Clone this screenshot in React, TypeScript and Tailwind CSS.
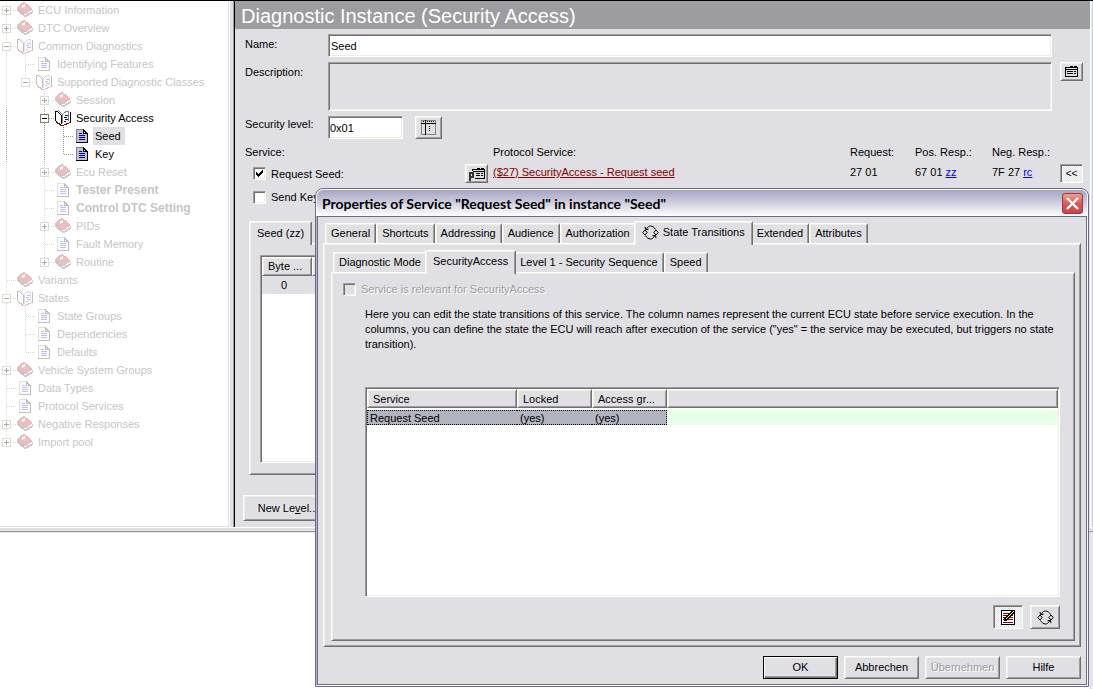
import React from "react";

const bevelOut =
  "border border-t-white border-l-white border-r-[#71706a] border-b-[#71706a] shadow-[inset_1px_1px_0_#f1efe2,inset_-1px_-1px_0_#9d9ca1]";
const bevelIn =
  "border border-t-[#9d9ca1] border-l-[#9d9ca1] border-r-white border-b-white shadow-[inset_1px_1px_0_#71706a,inset_-1px_-1px_0_#f1efe2]";
const hatch =
  "bg-[repeating-conic-gradient(#ffffff_0_25%,#e0dfe3_0_50%)] bg-size-[2px_2px]";

/* ---------- tree ---------- */

type Kind = "book" | "open" | "doc";
type Node = { cells: string; kind: Kind; label: string; live?: boolean; bold?: boolean; selected?: boolean };

/* One character per indent column:
   "|" line, "+" / "-" expander, "m" / "c" last expander (open / closed),
   "t" branch, "l" last branch, "." blank */
const nodes: Node[] = [
  { cells: "+", kind: "book", label: "ECU Information" },
  { cells: "+", kind: "book", label: "DTC Overview" },
  { cells: "-", kind: "open", label: "Common Diagnostics" },
  { cells: "|t", kind: "doc", label: "Identifying Features" },
  { cells: "|m", kind: "open", label: "Supported Diagnostic Classes" },
  { cells: "|.+", kind: "book", label: "Session" },
  { cells: "|.-", kind: "open", label: "Security Access", live: true },
  { cells: "|.|t", kind: "doc", label: "Seed", live: true, selected: true },
  { cells: "|.|l", kind: "doc", label: "Key", live: true },
  { cells: "|.+", kind: "book", label: "Ecu Reset" },
  { cells: "|.t", kind: "doc", label: "Tester Present", bold: true },
  { cells: "|.t", kind: "doc", label: "Control DTC Setting", bold: true },
  { cells: "|.+", kind: "book", label: "PIDs" },
  { cells: "|.t", kind: "doc", label: "Fault Memory" },
  { cells: "|.c", kind: "book", label: "Routine" },
  { cells: "t", kind: "book", label: "Variants" },
  { cells: "-", kind: "open", label: "States" },
  { cells: "|t", kind: "doc", label: "State Groups" },
  { cells: "|t", kind: "doc", label: "Dependencies" },
  { cells: "|l", kind: "doc", label: "Defaults" },
  { cells: "+", kind: "book", label: "Vehicle System Groups" },
  { cells: "t", kind: "doc", label: "Data Types" },
  { cells: "t", kind: "doc", label: "Protocol Services" },
  { cells: "+", kind: "book", label: "Negative Responses" },
  { cells: "c", kind: "book", label: "Import pool" },
];

function Cell({ type, last, live }: { type: string; last: boolean; live?: boolean }) {
  const box = "+-cm".includes(type);
  const minus = type === "-" || type === "m";
  const stops = "lcm".includes(type);
  const line = live ? "#9d9c80" : "#dcdbd0";
  return (
    <svg width={last ? 16 : 19} height="18" className="shrink-0" shapeRendering="crispEdges" fill="none">
      {type !== "." && (
        <path d={stops ? "M6.5 0V9" : "M6.5 0V18"} stroke={line} strokeDasharray="1 1" />
      )}
      {last && <path d="M7 9.5H16" stroke={line} strokeDasharray="1 1" />}
      {box && (
        <>
          <rect x="2.5" y="5.5" width="8" height="8" fill="#fff" stroke={live ? "#848267" : "#dddcd0"} />
          <path d={minus ? "M4 9.5H9" : "M4 9.5H9M6.5 7V12"} stroke={live ? "#000" : "#a8a8a8"} />
        </>
      )}
    </svg>
  );
}

function NodeIcon({ kind, live }: { kind: Kind; live?: boolean }) {
  return (
    <svg width="18" height="18" className={live ? "shrink-0" : "shrink-0 opacity-25"} shapeRendering="crispEdges">
      {kind === "book" && (
        <>
          <path d="M1 7L8 2L16 9V12L9 16L1 9Z" fill="#fff" stroke="#444" />
          <path d="M1 7L8 1L16 8L9 13Z" fill="#b80000" stroke="#700" />
          <path d="M2 9L9 15L16 11" fill="none" stroke="#222" />
          <path d="M6 6L9 4" stroke="#fff" strokeWidth="2" />
        </>
      )}
      {kind === "open" && (
        <>
          <path d="M1 2H4L5 1L9 5L15 2V13L7 16L1 12Z" fill="#fff" />
          <path d="M1.5 2V11.5L6.5 16M1 2.5H3.5L7.5 6.5V15" fill="none" stroke="#000" />
          <path d="M4.5 1.5L8.5 5.5V14" fill="none" stroke="#848284" />
          <path d="M9 4.5L12.5 2.5H14.5V12" fill="none" stroke="#848284" />
          <path d="M16.5 3V13.5" stroke="#000" />
          <path d="M2 13L7 16.5H9L16 13.5" fill="none" stroke="#900000" />
          <path d="M11 6.5H14M10 8.5H13M11 10.5H14M10 12.5H12" stroke="#0000d8" />
        </>
      )}
      {kind === "doc" && (
        <>
          <path d="M3 2H11V6H15V16H3Z" fill={live ? "#c3c3c3" : "#f4f4f4"} />
          <path d="M3.5 16V2.5H11" fill="none" stroke="#848284" />
          <path d="M3 15.5H14.5V6.5H10.5V3L14.5 7" fill="none" stroke="#000" />
          <rect x="6" y="6" width="3" height="1" fill={live ? "#0000a8" : "#0000ff"} />
          <rect x="6" y="8" width="6" height="1" fill={live ? "#0000a8" : "#0000ff"} />
          <rect x="6" y="10" width="6" height="1" fill={live ? "#0000a8" : "#0000ff"} />
          <rect x="6" y="12" width="6" height="1" fill={live ? "#0000a8" : "#0000ff"} />
        </>
      )}
    </svg>
  );
}

function Tree() {
  return (
    <ul className="min-w-0 flex-1 border-r border-b border-[#dedde6]">
      {nodes.map((n) => (
        <li key={n.label} className="flex h-[18px] items-center whitespace-nowrap">
          {n.cells.split("").map((c, i) => (
            <Cell key={i} type={c} last={i === n.cells.length - 1} live={n.live} />
          ))}
          <NodeIcon kind={n.kind} live={n.live} />
          <span
            className={`ml-0.5 h-[18px] pl-0.5 leading-[18px] ${n.live ? "text-black" : "text-[#c6c6c6]"} ${
              n.bold ? "text-[12px] font-bold" : ""
            } ${n.selected ? "bg-[#e0dfe3] pr-1" : ""}`}
          >
            {n.label}
          </span>
        </li>
      ))}
    </ul>
  );
}

/* ---------- small drawings ---------- */

function CycleIcon() {
  return (
    <svg width="17" height="15" fill="none" stroke="#000" strokeWidth="1">
      <path d="M3 5L.8 7.5L3 10L5.2 7.5ZM14 5L11.8 7.5L14 10L16.2 7.5Z" />
      <path d="M4.5 4C5.5 2 7 1 8.5 1C10.5 1 12.5 2.5 13.5 4.5M3.5 10.5C4.5 12.5 6.5 14 8.5 14C10 14 11.5 13 12.5 11" />
      <path d="M3 1.8L3.5 4.6L6.5 4.2M14 13.2L13.5 10.4L10.5 10.8" />
    </svg>
  );
}

function FormIcon() {
  return (
    <svg width="13" height="11" shapeRendering="crispEdges" fill="none" stroke="#000">
      <path d="M.5 1.5H12.5V10.5H.5ZM1 3.5H12M5 .5H8M9 .5H12" />
      <path d="M2 5.5H8M9 5.5H11M2 7.5H8M9 7.5H11" />
    </svg>
  );
}

function ProtocolIcon() {
  return (
    <svg width="18" height="16" shapeRendering="crispEdges" fill="none" stroke="#000">
      <path d="M4.5 5V3.5H16.5V12.5H7M5 5.5H16M9 2.5H12M13 2.5H16" />
      <path d="M8 7.5H12M13 7.5H15M8 9.5H12M13 9.5H15" />
      <path d="M2 6V15M2 7H5V11H2" stroke="#333" strokeWidth="2" />
    </svg>
  );
}

function GridIcon() {
  return (
    <svg width="17" height="17" shapeRendering="crispEdges" fill="none">
      <path d="M1.5 1.5H15.5V15.5H1.5Z" stroke="#848284" />
      <path d="M1 4.5H16M5.5 1V16" stroke="#000" />
      <path d="M3 2.5H15" stroke="#000" strokeDasharray="1 1" />
      <path d="M9.5 7V12" stroke="#000" strokeDasharray="1 1" />
    </svg>
  );
}

function EditIcon() {
  return (
    <svg width="14" height="15" shapeRendering="crispEdges" fill="none">
      <rect x=".5" y=".5" width="13" height="14" fill="#fff" stroke="#000" />
      <path d="M2 3.5H12M2 5.5H12M2 7.5H12M2 9.5H12M2 12.5H12" stroke="#800000" />
      <path d="M4 10L12 2" stroke="#000" strokeWidth="3" />
      <path d="M5 9L12 2" stroke="#ffff80" strokeWidth="1" />
      <path d="M3 10.5H6" stroke="#000" />
    </svg>
  );
}

function Check({ id, checked, disabled }: { id: string; checked?: boolean; disabled?: boolean }) {
  return (
    <span className="grid shrink-0">
      <input
        id={id}
        type="checkbox"
        defaultChecked={checked}
        disabled={disabled}
        className={`peer col-start-1 row-start-1 size-[13px] appearance-none ${disabled ? "bg-[#e0dfe3]" : "bg-white"} ${bevelIn}`}
      />
      <svg
        width="13"
        height="13"
        className="pointer-events-none invisible col-start-1 row-start-1 peer-checked:visible"
        shapeRendering="crispEdges"
      >
        <path d="M3 5V8L5 10L10 5V2L5 7Z" fill="#000" />
      </svg>
    </span>
  );
}

/* ---------- tabs ---------- */

function Tab({ label, selected, icon }: { label: string; selected?: boolean; icon?: React.ReactNode }) {
  return (
    <button
      role="tab"
      aria-selected={!!selected}
      className={`flex items-center gap-1 rounded-t-xs border border-b-0 border-t-white border-l-white border-r-[#71706a] bg-[#e0dfe3] whitespace-nowrap shadow-[inset_1px_1px_0_#f1efe2,inset_-1px_0_0_#9d9ca1] ${
        selected ? "relative -mx-0.5 -mb-0.5 h-6 px-[7px] pb-0.5" : "h-5 px-[5px]"
      }`}
    >
      {icon}
      {label}
    </button>
  );
}

/* ---------- main form ---------- */

const serviceGrid = "grid grid-cols-[220px_28px_1fr_65px_77px_68px_23px]";

function InstancePanel() {
  return (
    <main className="flex min-w-0 flex-1 flex-col bg-[#e0dfe3]">
      <h1 className="h-7 bg-[#9d9ca1] pl-1.5 text-[20px] leading-[30px] whitespace-nowrap text-white">
        Diagnostic Instance (Security Access)
      </h1>
      <div className="flex flex-col gap-[5px] pt-[5px] pr-[7px] pl-2.5">
        <div className="flex pr-[31px]">
          <label htmlFor="name" className="w-[83px] pt-0.5 leading-4">Name:</label>
          <input id="name" defaultValue="Seed" className={`h-[23px] min-w-0 flex-1 bg-white px-0.5 ${bevelIn}`} />
        </div>
        <div className="flex items-start">
          <label htmlFor="desc" className="w-[83px] pt-0.5 leading-4">Description:</label>
          <textarea id="desc" className={`h-[49px] min-w-0 flex-1 resize-none bg-[#e0dfe3] ${bevelIn}`} />
          <button aria-label="Edit description" className={`ml-2 flex h-[19px] w-[23px] items-center justify-center ${bevelOut}`}>
            <FormIcon />
          </button>
        </div>
        <div className="flex">
          <label htmlFor="level" className="w-[83px] leading-4">Security level:</label>
          <input id="level" defaultValue="0x01" className={`h-[23px] w-[75px] bg-white px-px ${bevelIn}`} />
          <button aria-label="Choose level" className={`ml-3 flex h-[23px] w-[27px] items-center justify-center ${bevelOut}`}>
            <GridIcon />
          </button>
        </div>
        <div>
          <div className={`${serviceGrid} h-5 leading-4`}>
            <span className="col-span-2">Service:</span>
            <span>Protocol Service:</span>
            <span>Request:</span>
            <span>Pos. Resp.:</span>
            <span>Neg. Resp.:</span>
          </div>
          <div className={`${serviceGrid} h-[19px] items-start leading-4`}>
            <span className="flex h-[19px] items-center gap-[5px] pl-2">
              <Check id="reqseed" checked />
              <label htmlFor="reqseed">Request Seed:</label>
            </span>
            <button aria-label="Protocol service" className={`flex h-[19px] w-[23px] items-center justify-center ${bevelOut}`}>
              <ProtocolIcon />
            </button>
            <a href="#service" className="text-[#800000] underline">($27) SecurityAccess - Request seed</a>
            <span>27 01</span>
            <span>67 01 <a href="#zz" className="text-[#0000ff] underline">zz</a></span>
            <span>7F 27 <a href="#rc" className="text-[#0000ff] underline">rc</a></span>
            <button className={`h-[19px] text-[10px] leading-none ${hatch} ${bevelIn}`}>&lt;&lt;</button>
          </div>
          <div className="mt-1.5 flex items-center gap-[5px] pl-2 leading-4">
            <Check id="sendkey" />
            <label htmlFor="sendkey">Send Key:</label>
          </div>
        </div>
      </div>
      <div className="flex flex-1 flex-col px-2 pt-4">
        <div className="flex flex-col pl-1.5">
          <div className="flex" role="tablist">
            <button role="tab" aria-selected="true" className="relative -mb-0.5 h-6 rounded-t-xs border border-b-0 border-t-white border-l-white border-r-[#71706a] bg-[#e0dfe3] px-[7px] shadow-[inset_1px_1px_0_#f1efe2,inset_-1px_0_0_#9d9ca1]">
              Seed (zz)
            </button>
          </div>
          <div className={`h-[232px] px-2.5 py-[11px] ${bevelOut}`}>
            <div className={`h-[208px] bg-white p-px ${bevelIn}`}>
              <table className="border-separate border-spacing-0">
                <thead>
                  <tr>
                    <th className={`h-[19px] w-[50px] p-0 pl-[5px] text-left font-normal bg-[#e0dfe3] ${bevelOut}`}>Byte ...</th>
                    <th className={`w-[80px] p-0 bg-[#e0dfe3] ${bevelOut}`} />
                  </tr>
                </thead>
                <tbody>
                  <tr className="h-[18px] bg-[#e0dfe3]">
                    <td className="p-0 pr-1.5 text-center">0</td>
                    <td className="p-0" />
                  </tr>
                </tbody>
              </table>
            </div>
          </div>
        </div>
        <div className="pt-5">
          <button className={`h-[26px] w-[90px] ${bevelOut}`}>
            New Le<u>v</u>el...
          </button>
        </div>
      </div>
    </main>
  );
}

/* ---------- dialog ---------- */

function Dialog() {
  return (
    <section
      role="dialog"
      aria-labelledby="dlg-title"
      className="absolute top-[188px] right-1 left-[315px] rounded-t-lg border border-[#6b6a89] bg-white p-px"
    >
      <header className="flex h-[26px] items-center justify-between rounded-t-md bg-linear-to-b from-[#a5a4c0] via-[#cfcfdf] to-white pr-1 pl-[5px]">
        <h2 id="dlg-title" className="pt-0.5 font-[Lato,sans-serif] text-[14px] leading-5 font-bold whitespace-nowrap text-black">
          Properties of Service "Request Seed" in instance "Seed"
        </h2>
        <button aria-label="Close" className="flex size-[21px] items-center justify-center rounded-[3px] border border-[#a03048] bg-linear-to-b from-[#eba08c] via-[#d95a58] to-[#c84650]">
          <svg width="13" height="13" stroke="#fff" strokeWidth="2.4">
            <path d="M1 1L12 12M12 1L1 12" />
          </svg>
        </button>
      </header>
      <div className="border border-[#6b6a89] bg-[#e0dfe3] px-[5px] pt-1 pb-[5px] shadow-[-1px_0_0_#b5b4c8]">
        <div role="tablist" className="flex items-end pl-0.5">
          <Tab label="General" />
          <Tab label="Shortcuts" />
          <Tab label="Addressing" />
          <Tab label="Audience" />
          <Tab label="Authorization" />
          <Tab label="State Transitions" selected icon={<CycleIcon />} />
          <Tab label="Extended" />
          <Tab label="Attributes" />
        </div>
        <div role="tabpanel" className={`pt-1.5 pr-[5px] pb-[5px] pl-[7px] ${bevelOut}`}>
          <div role="tablist" className="flex items-end pl-0.5">
            <Tab label="Diagnostic Mode" />
            <Tab label="SecurityAccess" selected />
            <Tab label="Level 1 - Security Sequence" />
            <Tab label="Speed" />
          </div>
          <div role="tabpanel" className={`px-[11px] pt-2 pb-[11px] ${bevelOut}`}>
            <div className="flex items-center gap-[5px] leading-4">
              <Check id="relevant" disabled />
              <label htmlFor="relevant" className="text-[#9d9ca1] [text-shadow:1px_1px_0_#fff]">
                Service is relevant for SecurityAccess
              </label>
            </div>
            <div className="pr-[3px] pl-[22px]">
              <p className="min-h-[90px] pt-2.5 leading-[15px]">
                Here you can edit the state transitions of this service. The column names represent the current ECU
                state before service execution. In the columns, you can define the state the ECU will reach after
                execution of the service ("yes" = the service may be executed, but triggers no state transition).
              </p>
              <div className={`h-[210px] bg-white p-px ${bevelIn}`}>
                <table className="w-full table-fixed border-separate border-spacing-0">
                  <colgroup>
                    <col className="w-[150px]" />
                    <col className="w-[75px]" />
                    <col className="w-[75px]" />
                    <col />
                  </colgroup>
                  <thead>
                    <tr>
                      {["Service", "Locked", "Access gr...", ""].map((h) => (
                        <th key={h} className={`h-[19px] bg-[#e0dfe3] p-0 pl-[5px] text-left leading-4 font-normal ${bevelOut}`}>{h}</th>
                      ))}
                    </tr>
                  </thead>
                  <tbody className="before:block before:h-0.5">
                    <tr className="leading-3">
                      <td className="border-y border-l border-dotted border-black bg-[#b2b4bf] p-0 pt-px pl-0.5">Request Seed</td>
                      <td className="border-y border-dotted border-black bg-[#b2b4bf] p-0 pt-px pl-[3px]">(yes)</td>
                      <td className="border-y border-r border-dotted border-black bg-[#b2b4bf] p-0 pt-px pl-[3px]">(yes)</td>
                      <td className="bg-[#e6ffe6] p-0" />
                    </tr>
                  </tbody>
                </table>
              </div>
              <div className="mt-2 flex justify-end gap-[7px]">
                <button aria-label="Edit" className={`flex h-6 w-[30px] items-center justify-center ${hatch} ${bevelIn}`}>
                  <EditIcon />
                </button>
                <button aria-label="Cycle" className={`flex h-6 w-[30px] items-center justify-center ${bevelOut}`}>
                  <CycleIcon />
                </button>
              </div>
            </div>
          </div>
        </div>
        <footer className="mt-[9px] flex justify-end gap-1.5">
          <button className="h-[23px] w-[75px] border border-black shadow-[inset_1px_1px_0_#fff,inset_-1px_-1px_0_#71706a,inset_-2px_-2px_0_#9d9ca1]">OK</button>
          <button className={`h-[23px] w-[75px] ${bevelOut}`}>Abbrechen</button>
          <button disabled className={`h-[23px] w-[75px] text-[#9d9ca1] [text-shadow:1px_1px_0_#fff] ${bevelOut}`}>Übernehmen</button>
          <button className={`h-[23px] w-[75px] ${bevelOut}`}>Hilfe</button>
        </footer>
      </div>
    </section>
  );
}

export default function App() {
  return (
    <div className="relative flex min-h-screen flex-col bg-white font-['Liberation_Sans',Arial,sans-serif] text-[11px] text-black">
      <div className="border-b border-[#e0dfe3]">
        <div className="flex min-h-[532px] flex-col border-b border-[#9d9ca1] bg-[#e0dfe3] pb-[3px]">
          <div className="flex flex-1 border-t border-b border-t-black border-b-white">
            <aside className="flex w-[235px] shrink-0 border-r border-black bg-[#e0dfe3]">
              <div className="flex w-[229px] bg-white">
                <Tree />
              </div>
              <div className="flex-1 border-r border-l border-l-white border-r-[#9d9ca1]" />
            </aside>
            <InstancePanel />
            <div className="w-[3px] border-x border-l-white border-r-[#cfcee0] bg-[#ecebf2]" />
          </div>
        </div>
      </div>
      <div className="flex flex-1 justify-end">
        <div className="w-1 bg-[#e6e5ee]" />
      </div>
      <Dialog />
    </div>
  );
}
